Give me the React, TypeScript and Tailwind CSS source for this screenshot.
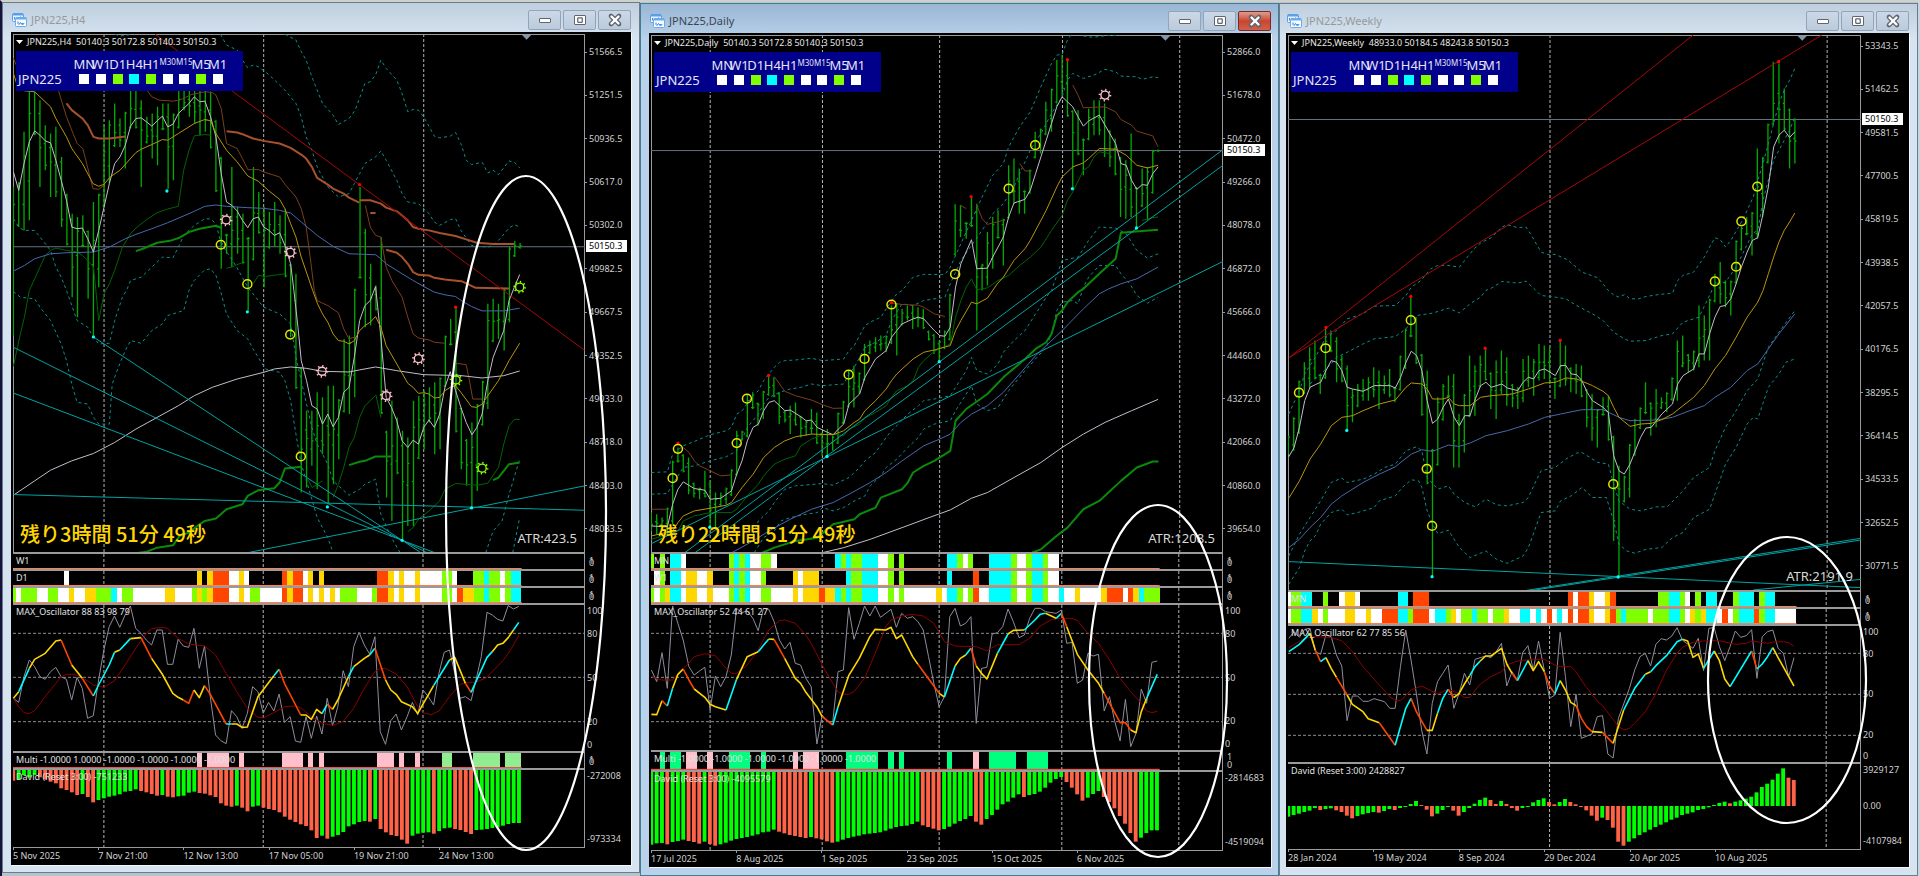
import { Square, X } from "lucide-react";

type Marker = "circle" | "pink" | "lime" | "high" | "low";

interface Curve {
  color: string;
  width?: number;
  dash?: string;
  paths: string[];
}

interface ChartWindow {
  title: string;
  active: boolean;
  frame: string;
  axis: string;
  quote: string;
  remaining: string;
  atr: string;
  prices: string[];
  pricePad: string;
  current: { value: string; y: number };
  originX: number;
  width: number;
  priceBox: [number, number];
  grid: number[];
  bars: string;
  curves: Curve[];
  marks: [Marker, number, number][];
  triangle: number;
  strips: { label: string; data: string }[];
  osc: { label: string; size: string; box: [number, number]; levels: number[]; fast: string; slow: string; main: string };
  multi?: { label: string; size: string; data: string };
  david: { label: string; size: string; box: [number, number]; base: number; data: string; axis: string[] };
  dates: string[];
  dateRow: string;
  ring: { box: string; cx: number; cy: number; rx: number; ry: number };
}

const STEP = 13.06;

const SEG: Record<string, string> = {
  w: "#ffffff",
  l: "#7fff00",
  g: "#ffd700",
  c: "#00ffff",
  r: "#ff4500",
  p: "#ffc0cb",
  s: "#00ff7f",
  n: "#90ee90",
};

const WHITE = "#c4bccb";
const GOLD = "#b8960c";
const BROWN = "#7a3e1e";
const SIENNA = "#a8522d";
const BLUE = "#4868ac";
const GREEN = "#006400";
const GREEN2 = "#0a8a0a";
const TEAL = "#0a8f8f";
const TREND = "#00a3a3";
const RED = "#a80808";

const h4: ChartWindow = {
  title: "JPN225,H4",
  active: false,
  frame: "mb-[3px] pl-[8px] pr-[8px] pb-[7px]",
  axis: "w-[46px]",
  quote: "JPN225,H4  50140.3 50172.8 50140.3 50150.3",
  remaining: "残り3時間 51分 49秒",
  atr: "ATR:423.5",
  prices: ["51566.5", "51251.5", "50936.5", "50617.0", "50302.0", "49982.5", "49667.5", "49352.5", "49033.0", "48718.0", "48403.0", "48083.5"],
  pricePad: "pt-3 pb-[17px]",
  current: { value: "50150.3", y: 739 },
  originX: 32,
  width: 1401,
  priceBox: [102, 1554],
  grid: [255, 646, 1038],
  bars:
    "560,1005 545,680 395,690 275,660 275,405 300,560 375,510 400,590 380,590 470,680 580,735 640,890 650,950 645,740 690,895 605,1005 580,860 375,620 360,550 310,440 355,440 335,505 270,385 265,385 300,560 350,430 340,475 320,495 310,390 310,565 340,540 260,385 265,330 265,350 265,370 265,405 265,395 275,445 360,575 470,805 700,760 500,800 620,760 640,790 710,930 500,780 575,700 620,860 635,745 605,740 645,760 625,830 790,1010 820,1165 1100,1475 1230,1460 1230,1395 1175,1465 1190,1360 1155,1510 1155,1450 1195,1375 1015,1235 1005,1240 865,1190 560,835 685,980 790,975 855,930 710,1240 1290,1490 1200,1560 1250,1420 1290,1615 1310,1575 1200,1575 1185,1375 1170,1345 1160,1265 1145,1360 1130,1345 1005,1160 955,1035 920,1295 1220,1405 1315,1455 1265,1520 1210,1470 1140,1275 910,1225 895,1025 910,1015 865,1050 740,965 722,770 728,745",
  curves: [
    {
      color: TEAL,
      dash: "3 3",
      paths: [
        "698,103 725,120 738,155 750,180 764,230 777,270 790,310 816,345 829,373 855,355 870,330 894,250 907,245 920,225 933,180 946,205 972,240 985,280 999,335 1012,328 1025,330 1038,350 1064,408 1077,413 1103,408 1116,397 1129,430 1142,480 1155,493 1181,486 1195,518 1208,510 1221,523 1247,482 1260,486 1273,503",
        "540,103 555,135 581,150 594,180 607,203 620,195 633,200 660,225 698,270 725,310 738,350 750,410 764,450 777,500 803,560 829,590 855,580 868,550 881,520 894,490 920,470 933,452 946,480 972,540 985,580 999,605 1025,610 1051,640 1064,665 1077,675 1103,658 1116,655 1129,690 1155,735 1195,740 1208,735 1221,720 1247,683 1260,673 1273,680",
        "33,655 46,680 59,690 85,690 98,710 124,750 137,800 150,830 163,870 189,960 215,980 229,1010 242,1030 268,1028 281,960 300,890 310,870 320,840 346,830 372,800 398,770 424,772 437,740 450,705 463,690 476,675 502,655 516,656 529,670 542,730 580,800 607,860 646,920 685,940 712,970 725,1070 738,1140 764,1280 777,1330 803,1390 816,1440 855,1483 881,1465 894,1450 920,1435 933,1540 959,1610 980,1655",
        "33,873 50,890 85,895 98,920 124,960 150,1030 163,1080 176,1150 189,1205 215,1210 229,1250 242,1270 268,1270 275,1150 290,1100 307,1050 320,1020 346,1028 372,990 398,970 411,945 450,930 463,870 476,840 500,810 516,805 529,825 540,870 555,940 581,990 607,1015 620,1045 650,1105 685,1115 698,1140 712,1200 725,1300 738,1390 751,1440 777,1550 803,1610 816,1655",
        "1190,1655 1208,1590 1230,1560 1247,1480 1273,1375",
        "1256,1655 1273,1550",
        "282,103 295,108 318,104",
      ],
    },
    {
      color: GREEN,
      paths: [
        "33,1097 50,1000 60,950 72,870 85,835 98,800 111,765 124,750 137,743 163,750 189,755 202,765 215,780 229,800 235,870 242,960 255,880 268,850 281,810 300,740 320,700 333,683 359,658 385,637 411,626 437,618 450,510 463,450 476,407 502,403 516,405",
        "555,803 568,800 580,793 594,787",
        "620,850 633,825 650,828 685,822 698,820",
        "751,1430 765,1460 790,1440",
        "816,1490 829,1450 842,1400 855,1340 868,1310 881,1250 894,1215 907,1200 921,1183 933,1250",
        "999,1592 1012,1580 1025,1555 1051,1530 1077,1500 1090,1465 1116,1448 1168,1453 1195,1447 1221,1400 1234,1330 1247,1275 1260,1256 1273,1256",
      ],
    },
    {
      color: GREEN2,
      width: 2,
      paths: [
        "333,752 350,745 385,727 420,720 440,712 463,695 489,685 529,676 542,682",
        "337,1656 360,1652 385,1640 424,1633 440,1605 463,1595 489,1570 502,1560 529,1553 555,1525 594,1510 607,1485 633,1468 672,1462 685,1445 698,1403 738,1398",
        "855,1393 881,1383 894,1380 920,1367 959,1367",
        "1208,1438 1221,1430 1247,1390 1273,1385",
      ],
    },
    {
      color: BROWN,
      paths: [
        "33,175 40,195",
        "143,270 163,350 189,430 203,445 228,565 242,567 255,555",
        "360,270 372,290 390,300 424,303 440,300 470,283 502,275 520,277 529,285 542,325 555,430 581,445 594,475 607,508 633,508 646,515 685,530 700,555 725,590 738,625 750,680 762,790 770,870 777,900 790,908 803,915 829,937 842,985 855,1015 868,1010",
        "895,615 907,680 920,705 933,710 946,800 960,840 985,890 999,950 1012,1000 1025,1012 1051,1018 1064,1025 1090,1028",
        "1116,1088 1142,1092 1150,1140 1158,1195 1181,1195",
      ],
    },
    {
      color: SIENNA,
      width: 2,
      paths: [
        "163,310 176,330 202,355 215,375 229,410 242,415 268,415 307,409",
        "555,393 581,397 594,402 620,415 646,422 685,430 712,443 738,463 750,475 764,500 777,533 803,553 816,565 842,580 855,592 880,607",
        "881,600 907,600 933,610 946,622 972,633 999,660 1012,680 1025,685 1051,690 1077,698 1116,707 1142,717 1168,727 1208,731 1260,731",
        "946,748 972,757 985,770 999,790 1012,815 1025,823 1051,825 1064,832 1090,837 1130,842 1145,850 1165,862 1247,864",
        "907,638 920,638",
      ],
    },
    {
      color: BLUE,
      paths: [
        "33,812 60,795 85,775 124,760 163,757 229,755 268,740 307,715 333,702 372,685 411,667 463,640 502,618 529,614 555,618 607,622 646,624 685,630 712,638 738,665 777,705 816,738 855,760 920,763 933,775 946,790 985,820 1012,840 1038,858 1064,875 1090,883 1116,888 1130,900 1155,918 1181,931 1234,931 1273,923",
      ],
    },
    {
      color: WHITE,
      paths: [
        "33,1483 85,1440 124,1408 176,1380 229,1358 281,1325 333,1285 385,1250 437,1215 476,1185 520,1160 581,1135 646,1115 672,1105 712,1099 750,1103 790,1112 855,1114 880,1108 920,1099 972,1110 1038,1122 1103,1124 1116,1123 1181,1132 1234,1125 1273,1111",
        "33,515 46,570 59,490 72,425 85,392 98,405 111,422 124,428 137,480 150,540 163,600 176,680 189,685 202,683 215,715 229,755 242,690 255,620 268,550 281,490 294,470 307,435 320,378 333,355 346,353 359,365 372,378 385,362 398,348 411,380 424,372 437,340 450,325 463,310 476,290 489,305 502,303 516,350 529,410 542,520 555,605 568,615 581,632 594,660 607,682 620,655 633,650 646,680 659,690 672,705 685,697 698,735 712,790 720,870 730,980 738,1080 751,1140 764,1215 777,1225 790,1270 803,1240 816,1278 829,1250 842,1175 855,1160 868,1070 881,960 894,915 907,900 920,858 933,1010 946,1190 959,1220 972,1260 985,1320 999,1340 1012,1318 1025,1330 1038,1280 1051,1258 1064,1280 1077,1240 1090,1160 1103,1113 1116,1170 1129,1220 1142,1265 1156,1302 1168,1280 1181,1240 1195,1140 1208,1070 1221,1030 1234,990 1247,900 1260,860 1273,822",
      ],
    },
    {
      color: GOLD,
      paths: [
        "33,220 45,265 60,272 85,275 98,290 124,320 137,355 163,410 176,445 202,490 228,550 242,558 255,552 270,530 294,510 333,457 346,447 372,433 398,418 411,420 437,400 476,370 502,358 516,362 529,400 555,450 581,485 607,527 633,543 660,573 685,597 698,625 712,670 725,710 738,770 752,820 766,870 778,910 790,940 803,965 816,1000 829,1020 842,1022 855,1030 868,1020 881,990 894,975 907,965 920,948 933,980 946,1035 972,1090 999,1148 1012,1160 1025,1178 1038,1176 1051,1180 1064,1192 1077,1190 1090,1170 1103,1160 1116,1155 1129,1175 1155,1218 1168,1220 1181,1210 1195,1185 1221,1140 1247,1080 1273,1028",
      ],
    },
    {
      color: TREND,
      paths: ["229,1009 985,1618 1032,1656", "33,1040 985,1618 1048,1656", "33,1177 985,1618 1067,1656", "33,1481 1432,1528", "607,1655 1432,1455"],
    },
    { color: RED, paths: ["380,103 1432,1049"] },
  ],
  marks: [
    ["high", 881, 553], ["high", 1116, 920],
    ["low", 409, 572], ["low", 229, 1009], ["low", 606, 934], ["low", 802, 1518], ["low", 985, 1618], ["low", 1155, 1521],
    ["circle", 541, 733], ["circle", 606, 851], ["circle", 711, 1002], ["circle", 737, 1367],
    ["pink", 554, 659], ["pink", 711, 756], ["pink", 789, 1112], ["pink", 1025, 1074], ["pink", 946, 1185],
    ["lime", 1273, 860], ["lime", 1117, 1138], ["lime", 1181, 1402],
  ],
  triangle: 1290,
  strips: [
    { label: "W1", data: "" },
    {
      label: "D1",
      data: "k157 w169 k483 g495 k509 g522 r561 w587 g600 w612 k692 r704 g718 r743 w757 g769 k783 g796 k926 r953 g966 w979 g992 w1018 g1031 w1084 l1110 w1122 k1161 l1187 c1200 l1227 w1240 l1253 c1279",
    },
    {
      label: "",
      data: "l39 w51 l91 w118 l142 w169 g182 w208 g235 l273 c287 w300 l326 w404 g430 w470 l483 g496 l509 g522 r561 w587 g600 w613 l639 w692 r704 g718 r743 w757 g769 w783 g796 w809 g822 w835 l875 w914 l926 r953 g966 w979 g992 w1018 g1031 w1084 l1110 w1122 r1135 g1162 l1187 c1200 l1227 w1240 l1253 c1279",
    },
  ],
  osc: {
    label: "MAX_Oscillator 88 83 98 79",
    size: "h-[148px]",
    box: [195, 438],
    levels: [280, 412, 545],
    fast: "33,475 46,487 59,410 72,360 85,380 98,410 111,418 124,395 137,382 150,410 163,418 176,480 189,412 202,445 215,535 229,527 242,420 255,330 268,260 281,228 294,262 307,225 320,198 333,265 346,280 359,300 372,315 385,270 398,270 411,373 424,373 437,298 450,318 463,322 476,265 489,385 502,318 516,470 529,585 542,602 555,611 568,512 581,530 594,565 607,520 620,440 633,455 646,520 659,487 672,513 685,462 698,547 712,530 725,603 738,607 751,530 764,595 777,528 790,582 803,475 816,557 829,500 842,392 855,440 868,320 881,277 894,315 907,342 920,290 933,575 946,613 959,542 972,522 985,570 999,530 1012,487 1025,525 1038,450 1051,470 1064,495 1077,400 1090,337 1103,330 1116,400 1129,475 1142,470 1156,482 1168,420 1181,350 1195,217 1208,225 1221,238 1234,243 1247,197 1260,207 1273,199",
    slow: "33,475 46,500 59,518 72,521 85,512 111,470 137,430 150,410 163,403 182,403 202,412 229,435 255,442 281,422 307,375 333,325 359,280 372,266 398,262 411,265 437,295 463,312 502,318 529,345 555,400 581,455 607,505 633,532 646,534 672,518 698,500 725,498 738,503 764,530 790,550 816,556 842,545 868,505 894,445 920,395 933,385 946,385 972,402 999,440 1025,500 1038,518 1058,524 1077,513 1103,470 1129,433 1150,427 1168,427 1195,412 1208,395 1234,362 1247,340 1260,315 1273,285",
    main: "g 33,475 46,455 c 72,385 g 85,358 111,340 137,303 150,300 r 176,375 g 202,415 r 229,468 c 242,435 268,375 281,337 g 294,330 c 320,296 g 346,293 r 372,355 g 398,402 424,460 437,472 450,480 r 463,490 476,450 g 489,473 502,437 r 516,463 555,552 c 568,552 g 581,552 594,562 607,561 633,470 672,407 c 685,388 r 698,430 738,525 g 751,525 764,538 777,508 790,521 c 803,493 r 816,508 g 829,480 855,410 c 868,380 g 894,355 907,345 c 920,325 r 946,420 g 959,450 972,463 985,485 1012,500 1025,520 1064,437 c 1103,360 g 1116,352 1142,430 r 1156,457 c 1195,352 1208,335 g 1221,315 1234,310 1247,293 1260,270 c 1273,247",
  },
  multi: {
    label: "Multi -1.0000 1.0000 -1.0000 -1.0000 -1.0000 -1.0000",
    size: "h-[17px]",
    data: "k483 p495 k509 p561 k587 p600 k692 p743 k757 p769 k783 p796 k926 p966 k979 p992 k1018 p1031 k1084 n1110 k1161 n1227 k1240 n1279",
  },
  david: {
    label: "David (Reset 3:00) -751233",
    size: "h-[79px]",
    box: [690, 231],
    base: 690,
    data: "r722 g718 g705 g712 g705 r712 r718 r725 r730 r745 r750 r757 r765 g762 r771 r787 g780 g775 g770 g767 g763 g755 g753 g748 r753 r757 r762 r767 g765 r770 r772 g769 g767 g758 g755 r759 r761 r766 r771 r790 r797 r800 g797 r803 r814 g800 g797 r803 r807 r810 r817 r830 r839 r846 r853 r858 r871 r894 g887 r896 g890 g885 g876 g859 g853 g846 g843 r845 g837 r867 r877 r885 r888 r899 r911 g887 g881 g878 g877 r881 g873 g865 g863 r867 r870 r876 r882 g870 g869 g867 g864 g862 g857 g852 g849 g849",
    axis: ["-272008", "-973334"],
  },
  dates: ["5 Nov 2025", "7 Nov 21:00", "12 Nov 13:00", "17 Nov 05:00", "19 Nov 21:00", "24 Nov 13:00"],
  dateRow: "h-[18px]",
  ring: { box: "0 0 620 833", cx: 515, cy: 481, rx: 80, ry: 337 },
};

const daily: ChartWindow = {
  title: "JPN225,Daily",
  active: true,
  frame: "mt-px pl-[8px] pr-[7px] pb-[8px]",
  axis: "w-12",
  quote: "JPN225,Daily  50140.3 50172.8 50140.3 50150.3",
  remaining: "残り22時間 51分 49秒",
  atr: "ATR:1208.5",
  prices: ["52866.0", "51678.0", "50472.0", "49266.0", "48078.0", "46872.0", "45666.0", "44460.0", "43272.0", "42066.0", "40860.0", "39654.0"],
  pricePad: "pt-[11px] pb-[17px]",
  current: { value: "50150.3", y: 451 },
  originX: 27,
  width: 1401,
  priceBox: [105, 1551],
  grid: [172, 447, 734, 1035, 1322],
  bars:
    "1535,1590 1540,1600 1550,1585 1520,1600 1380,1570 1340,1385 1360,1415 1370,1480 1445,1490 1460,1495 1410,1490 1440,1580 1475,1580 1475,1515 1460,1510 1405,1485 1290,1425 1290,1320 1180,1310 1175,1225 1205,1275 1170,1255 1125,1185 1130,1190 1175,1270 1230,1265 1215,1300 1205,1275 1245,1310 1260,1305 1225,1300 1235,1330 1295,1365 1285,1368 1305,1350 1235,1330 1200,1270 1110,1220 1095,1220 1115,1180 1030,1140 1020,1060 1010,1055 1005,1050 1005,1055 915,1030 910,1065 925,975 915,960 915,985 920,980 925,985 990,1020 1000,1060 1020,1080 990,1045 880,1020 612,765 615,710 665,715 590,680 610,990 790,870 695,855 650,805 630,715 655,795 495,655 475,610 505,640 570,640 508,580 395,475 385,460 305,405 265,395 180,310 165,290 180,350 330,570 330,465 415,525 325,420 300,405 300,405 310,470 390,500 415,525 470,650 480,655 400,650 560,680 505,620 500,660 450,580 448,455",
  curves: [
    {
      color: TEAL,
      dash: "3 3",
      paths: [
        "28,1415 67,1413 80,1360 106,1335 133,1322 172,1302 211,1290 224,1280 237,1240 250,1230 277,1185 290,1170 303,1140 329,1100 342,1085 355,1080 381,1078 420,1073 447,1080 499,1075 512,1050 525,1035 551,975 564,965 590,950 603,925 629,880 642,870 669,830 695,822 747,822 760,800 786,730 812,660 838,590 864,525 890,490 903,440 930,380 956,335 982,260 1008,190 1021,165 1034,163 1047,120 1055,106",
        "28,1480 67,1478 80,1450 106,1400 133,1395 172,1380 211,1368 237,1350 263,1280 290,1240 303,1210 316,1190 342,1175 368,1165 394,1160 420,1150 447,1155 499,1150 512,1120 525,1100 551,1040 577,1025 603,1005 616,960 642,910 669,915 695,900 747,890 760,850 786,780 812,735 838,690 864,640 890,610 916,560 930,520 956,450 982,400 1008,340 1034,290 1047,240 1060,220 1086,235 1112,225 1139,208 1165,215 1178,228 1217,230 1230,238 1256,230 1269,233",
        "1086,108 1110,112 1139,107 1170,106",
        "280,1655 303,1610 329,1590 345,1560 368,1550 407,1540 434,1535 447,1520 473,1530 499,1520 525,1500 551,1485 564,1455 590,1425 603,1400 629,1375 656,1340 682,1310 695,1285 721,1270 760,1260 773,1230 799,1180 812,1155 825,1210 851,1230 877,1220 903,1170 943,1110 969,1075 995,1040 1008,1000 1021,930 1034,905 1060,900 1073,910 1086,860 1099,830 1125,795 1165,795 1178,820 1200,850 1217,885 1243,908 1269,890",
        "277,1600 290,1560 316,1530 329,1505 355,1465 381,1455 447,1448 473,1453 512,1430 538,1400 551,1380 577,1355 603,1310 616,1290 629,1275 656,1240 682,1215 695,1200 721,1195 760,1185 773,1160 799,1110 812,1070 825,1110 851,1120 877,1090 890,1055 916,1020 943,990 969,940 995,890 1008,870 1034,780 1073,770 1099,720 1125,680 1165,683 1191,700 1217,750 1243,773 1269,760",
      ],
    },
    {
      color: GREEN,
      paths: [
        "28,1615 93,1590 106,1560 133,1545 172,1535 224,1535 237,1525 263,1485 290,1450 303,1425 329,1390 355,1375 381,1365 394,1335 420,1315 447,1302 473,1300 499,1305 512,1285 538,1270 551,1252 577,1235 603,1215 616,1190 629,1170 656,1155 669,1140 682,1100 695,1080 721,1052 760,1030 773,950 786,900 799,860 812,835 825,868 851,862 877,840 903,825 930,795 956,770 982,740 1008,690 1034,645 1047,600 1060,575 1086,510 1099,500 1112,470 1125,455 1152,460",
        "1230,660 1256,652 1269,650",
      ],
    },
    {
      color: GREEN2,
      width: 2,
      paths: [
        "300,1655 329,1640 381,1620 434,1610 473,1570 525,1555 538,1540 577,1520 590,1490 642,1465 656,1445 669,1415 695,1395 721,1380 760,1350 773,1260 799,1225 851,1180 890,1130 943,1075 969,1045 995,1025 1008,1000 1021,945 1034,930 1047,905 1073,875 1086,865 1125,820 1165,775 1178,697 1230,692 1269,688",
        "960,1655 982,1645 1020,1605 1047,1580 1086,1525 1125,1500 1178,1440 1217,1400 1256,1382 1270,1382",
      ],
    },
    {
      color: BROWN,
      paths: [
        "28,1525 67,1525",
        "106,1340 120,1355 133,1380 146,1395 172,1410 198,1425 224,1422",
        "329,1128 342,1150 355,1172 381,1185 420,1198 447,1212 473,1223 499,1222",
        "616,907 642,912 682,914 695,920 721,940 747,948",
        "786,615 799,625",
        "825,615 838,655 851,672 890,660",
        "930,490 943,512 956,512",
        "1060,255 1073,285 1086,323 1099,322 1139,320 1165,335 1178,358 1204,375 1217,393 1256,407 1269,440",
      ],
    },
    {
      color: BLUE,
      paths: [
        "225,1655 277,1620 316,1590 368,1555 420,1525 473,1505 512,1480 564,1445 603,1415 642,1380 695,1335 734,1315 760,1300 786,1265 812,1240 851,1215 890,1175 930,1120 969,1065 995,1035 1034,990 1086,925 1125,880 1148,865 1178,850 1217,835 1269,800",
      ],
    },
    {
      color: WHITE,
      paths: [
        "447,1655 499,1640 564,1615 642,1580 708,1550 760,1527 812,1492 851,1475 916,1430 982,1385 1034,1340 1086,1300 1139,1265 1204,1230 1269,1196",
        "28,1575 67,1578 80,1510 93,1465 106,1443 133,1463 159,1468 172,1495 198,1492 224,1470 237,1420 250,1380 263,1320 277,1280 290,1270 303,1230 316,1205 329,1200 342,1215 355,1230 368,1228 394,1248 407,1260 420,1258 434,1280 460,1295 473,1302 486,1285 499,1270 512,1210 525,1195 538,1180 551,1130 577,1075 603,1050 616,1010 629,990 642,970 669,955 682,950 695,955 721,990 734,1005 747,1007 760,980 773,860 786,790 812,718 825,805 851,803 864,770 890,710 903,650 916,608 943,597 956,570 969,520 982,470 995,420 1008,370 1021,320 1034,290 1047,305 1060,320 1073,350 1086,378 1099,362 1125,345 1139,375 1165,430 1178,490 1191,495 1204,540 1217,567 1230,553 1243,555 1256,520 1269,500",
      ],
    },
    {
      color: GOLD,
      paths: [
        "28,1605 80,1590 93,1565 106,1545 133,1530 172,1522 211,1513 224,1505 250,1460 277,1420 290,1395 303,1370 329,1340 355,1320 381,1308 420,1300 473,1302 499,1290 525,1265 538,1255 551,1230 577,1200 603,1165 616,1140 629,1120 642,1105 669,1075 695,1055 721,1048 760,1035 773,990 786,960 812,905 825,910 851,893 875,850 890,830 903,805 916,780 943,745 956,720 995,630 1021,560 1034,530 1060,500 1086,488 1099,475 1125,445 1165,447 1191,465 1217,495 1243,503 1269,495",
      ],
    },
    { color: TREND, paths: ["110,1655 1428,448", "135,1655 1428,495", "28,1628 1428,783"] },
  ],
  marks: [
    ["high", 1047, 179], ["high", 811, 589], ["high", 93, 1327], ["high", 315, 1124], ["high", 616, 907],
    ["low", 1059, 565], ["low", 1216, 683], ["low", 171, 1579], ["low", 458, 1367], ["low", 733, 1083],
    ["circle", 968, 435], ["circle", 903, 565], ["circle", 772, 821], ["circle", 80, 1432], ["circle", 93, 1344],
    ["circle", 237, 1327], ["circle", 262, 1194], ["circle", 511, 1122], ["circle", 550, 1075], ["circle", 616, 912],
    ["pink", 1139, 285],
  ],
  triangle: 1287,
  strips: [
    {
      label: "MN",
      data: "l34 k48 l61 k74 c100 w113 k218 l230 c244 l257 c270 w296 l322 w335 k479 c492 l505 c518 l544 c583 w609 l622 k635 l648 k753 c779 l792 w805 l818 k857 c910 l924 w948 l962 c988 l1001 w1028",
    },
    {
      label: "W1",
      data: "k34 w48 l61 k74 c100 w113 g140 w165 g179 k218 l230 c244 l257 c270 w296 l309 k375 g387 w400 g440 k505 c518 l544 c583 w609 l622 k635 l648 k753 c766 k818 r832 k857 c910 l924 w948 l962 c988 l1001 w1028",
    },
    {
      label: "",
      data: "l34 w48 l61 g74 c100 w113 g140 w165 g179 w218 l230 c244 l257 c270 w296 l322 w375 g387 w400 g440 r453 g479 c492 l505 c518 l544 c583 w609 l622 w635 l648 w727 g740 w753 c779 l792 w805 l818 r832 w857 c910 l924 w948 l962 c988 l1001 w1028 c1041 w1067 g1080 w1132 g1145 r1184 w1198 r1210 g1224 c1237 l1275",
    },
  ],
  osc: {
    label: "MAX_Oscillator 52 44 61 27",
    size: "h-[147px]",
    box: [195, 435],
    levels: [280, 412, 545],
    fast: "28,390 41,425 54,338 67,445 80,198 93,250 106,300 120,380 133,405 146,393 159,382 172,510 185,408 198,440 211,410 224,345 237,205 250,218 263,212 277,235 290,272 303,205 316,208 329,245 342,300 355,327 368,307 381,370 394,375 407,415 420,440 434,612 447,525 460,545 473,545 486,395 499,390 512,203 525,298 538,250 551,198 564,228 577,198 590,232 616,208 629,262 642,220 656,235 669,230 682,245 695,270 708,350 721,430 734,500 747,470 760,230 773,205 786,258 799,250 812,230 825,550 838,385 851,382 864,282 877,278 890,260 903,207 916,245 930,293 943,285 956,235 969,205 982,205 995,215 1021,220 1034,210 1047,310 1060,307 1073,430 1086,420 1099,340 1112,348 1125,343 1139,513 1152,470 1165,545 1178,603 1191,478 1204,620 1217,580 1230,447 1243,490 1256,367 1269,363",
    slow: "28,410 54,420 80,420 106,385 120,370 133,350 159,341 185,347 211,385 224,400 237,400 263,375 290,330 316,270 342,242 355,240 381,250 407,285 420,310 447,375 473,430 486,455 499,463 512,463 525,455 551,415 577,340 603,260 616,240 642,228 669,223 695,228 721,250 747,305 773,318 825,320 851,332 877,314 930,314 956,295 982,258 1008,240 1034,235 1060,235 1073,242 1099,280 1125,310 1152,360 1178,415 1204,455 1230,490 1243,513 1256,518 1269,514",
    main: "g 28,523 41,524 54,482 r 67,498 c 80,445 g 93,403 106,387 r 120,420 133,447 g 159,472 172,493 185,500 211,510 c 237,418 g 263,350 290,335 c 316,297 g 329,298 r 355,355 g 381,415 394,430 407,457 434,500 447,530 r 473,555 c 486,500 g 512,407 538,355 564,290 577,268 603,270 616,262 629,296 642,285 669,350 682,373 r 734,460 g 747,471 c 773,378 g 786,355 799,345 c 812,325 r 825,378 g 838,400 851,417 877,340 c 903,282 g 916,271 943,270 c 969,240 982,223 995,220 g 1021,235 c 1034,220 r 1047,260 g 1073,343 1099,390 1125,430 1139,460 r 1178,548 1191,548 1204,570 g 1217,578 1230,515 1243,475 c 1269,403",
  },
  multi: {
    label: "Multi -1.0000 -1.0000 -1.0000 -1.0000 -1.0000 -1.0000",
    size: "h-5",
    data: "k48 s61 k74 s100 k113 p140 k165 p179 k218 s270 k296 s309 k375 p387 k400 p440 k505 s583 k609 s622 k635 s648 k753 s766 k818 p832 k857 s923 k949 s1001",
  },
  david: {
    label: "David (Reset 3:00) -4095579",
    size: "h-20",
    box: [696, 234],
    base: 696,
    data: "g914 g910 g909 r913 g906 g903 g899 r903 r906 r911 g905 r912 r917 g913 g908 g902 g897 g894 g891 g887 g883 g877 g875 g869 r875 r880 r885 r888 r891 r894 g891 r895 r898 r904 r908 g905 g899 g894 g890 g887 g883 g881 g879 g877 g872 g866 g861 g858 g857 g852 g845 r856 r861 r866 r871 g867 g860 g851 g843 g837 g828 r845 r854 g837 g825 g809 g793 g785 g773 g763 r771 g765 g762 g755 g743 g728 g717 g711 r726 r743 r763 r782 g773 g762 g753 r771 r786 r805 r828 r851 r879 r905 g893 g879 g871 g871",
    axis: ["-2814683", "-4519094"],
  },
  dates: ["17 Jul 2025", "8 Aug 2025", "1 Sep 2025", "23 Sep 2025", "15 Oct 2025", "6 Nov 2025"],
  dateRow: "h-[17px]",
  ring: { box: "0 0 622 834", cx: 509, cy: 648, rx: 69, ry: 176 },
};

const weekly: ChartWindow = {
  title: "JPN225,Weekly",
  active: false,
  frame: "mt-px pl-[6px] pr-[8px] pb-[8px]",
  axis: "w-12",
  quote: "JPN225,Weekly  48933.0 50184.5 48243.8 50150.3",
  remaining: "",
  atr: "ATR:2191.9",
  prices: ["53343.5", "51462.5", "49581.5", "47700.5", "45819.5", "43938.5", "42057.5", "40176.5", "38295.5", "36414.5", "34533.5", "32652.5", "30771.5"],
  pricePad: "pt-[5px] pb-[18px]",
  current: { value: "50150.3", y: 358 },
  originX: 20,
  width: 1404,
  priceBox: [105, 1665],
  grid: [662, 1341],
  bars:
    "1305,1360 1250,1350 1140,1300 1085,1180 1040,1165 1020,1135 1120,1180 985,1135 990,1055 1010,1145 1065,1145 1095,1285 1165,1265 1150,1220 1135,1200 1130,1200 1100,1190 1110,1225 1125,1180 1105,1190 1160,1205 1065,1170 985,1105 890,1010 950,1090 1060,1245 1110,1450 1345,1725 1190,1395 1150,1260 1125,1190 1120,1400 1240,1400 1180,1355 1065,1250 1095,1245 1065,1160 1045,1140 1115,1225 1080,1255 1050,1180 1070,1215 1150,1220 1160,1225 1075,1205 1065,1160 1075,1185 1030,1140 1035,1135 1040,1150 1130,1195 1020,1160 1035,1155 1100,1175 1090,1180 1095,1190 1165,1280 1180,1320 1225,1340 1190,1245 1185,1320 1305,1620 1395,1725 1425,1505 1330,1490 1255,1365 1220,1285 1145,1240 1205,1305 1165,1280 1190,1225 1175,1235 1130,1200 1020,1200 1005,1100 1060,1115 1050,1110 915,1100 945,1080 895,1080 820,905 785,910 840,920 840,945 720,850 680,750 650,705 635,765 445,715 470,650 370,490 185,375 190,430 265,390 325,505 355,490",
  curves: [
    {
      color: TEAL,
      dash: "3 3",
      paths: [
        "22,1240 48,1170 61,1120 87,1070 113,1010 139,990 165,955 204,940 231,917 283,915 309,885 322,860 346,840 370,805 387,795 411,795 440,800 453,780 476,745 492,728 518,712 544,680 557,673 583,682 603,680 614,700 640,755 655,762 675,762 705,778 740,815 779,832 805,870 820,885 831,890 845,882 858,895 880,895 897,888 930,882 962,878 975,840 988,825 1014,815 1040,770 1053,740 1066,712 1079,718 1092,740 1105,720 1131,665 1145,630 1160,590 1171,540 1184,490 1197,430 1210,370 1223,310 1236,270 1249,240 1262,205",
        "74,1150 100,1120 126,1090 139,1070 165,1055 204,1030 231,1015 283,1008 309,985 335,945 374,938 413,923 440,937 466,910 492,890 505,870 520,862 544,843 583,848 603,842 626,868 640,885 675,890 701,895 727,915 766,940 792,960 818,995 844,1015 858,1022 897,1020 936,1005 962,1000 988,965 1027,950 1053,885 1066,850 1092,845 1118,800 1158,700 1171,690 1184,600 1197,540 1210,480 1236,420 1249,390 1262,350",
        "22,1665 48,1600 74,1550 100,1500 126,1445 152,1432 165,1445 204,1435 231,1420 257,1400 283,1390 309,1350 335,1338 348,1350 361,1430 387,1465 413,1455 427,1480 453,1505 479,1518 505,1495 531,1512 557,1515 596,1505 609,1490 622,1455 640,1410 675,1400 701,1375 727,1357 740,1355 779,1385 805,1390 818,1450 831,1500 858,1525 884,1530 923,1518 949,1518 988,1470 1014,1430 1053,1400 1066,1350 1092,1280 1118,1230 1145,1170 1171,1135 1197,1040 1223,995 1262,930",
        "22,1750 48,1700 61,1650 74,1620 87,1605 100,1570 126,1535 152,1525 165,1542 191,1535 231,1520 244,1500 283,1485 300,1460 322,1437 340,1440 348,1460 361,1530 374,1570 387,1598 413,1588 440,1640 466,1670 505,1650 531,1675 557,1687 596,1665 609,1640 640,1535 675,1530 688,1500 714,1485 740,1460 766,1490 800,1490 818,1560 831,1630 850,1650 870,1657 897,1645 936,1640 962,1610 988,1595 1014,1550 1053,1525 1066,1480 1092,1390 1118,1340 1145,1270 1160,1250 1171,1255 1197,1160 1223,1120 1240,1085 1262,1075",
      ],
    },
    {
      color: BLUE,
      paths: [
        "22,1640 48,1615 74,1580 100,1550 126,1510 152,1485 204,1445 244,1420 283,1398 322,1360 348,1347 374,1352 413,1333 440,1337 466,1327 505,1305 557,1290 609,1270 649,1250 688,1240 740,1227 792,1227 831,1250 858,1260 923,1258 962,1250 1000,1232 1040,1215 1066,1190 1105,1160 1145,1110 1171,1090 1197,1045 1223,1000 1262,940",
      ],
    },
    {
      color: WHITE,
      paths: [
        "22,1368 35,1340 48,1280 61,1200 74,1160 87,1152 100,1145 113,1110 126,1080 139,1085 152,1110 165,1160 178,1165 204,1172 231,1155 270,1155 283,1162 296,1130 309,1085 322,1052 335,1065 348,1110 361,1200 374,1268 387,1255 400,1220 413,1195 427,1250 440,1275 453,1245 466,1245 479,1195 492,1155 505,1145 518,1160 544,1150 557,1162 583,1170 596,1145 609,1130 622,1135 635,1110 649,1105 675,1125 688,1095 701,1095 714,1120 727,1122 740,1140 753,1175 766,1200 792,1220 805,1235 818,1365 831,1410 844,1420 858,1390 884,1310 897,1282 910,1280 936,1240 962,1210 975,1150 988,1125 1014,1105 1027,1060 1040,1060 1053,1000 1066,950 1079,918 1092,915 1105,895 1118,850 1131,800 1145,755 1158,720 1171,712 1184,640 1197,560 1210,440 1223,405 1236,390 1249,412 1262,395",
      ],
    },
    {
      color: GOLD,
      paths: [
        "22,1492 48,1440 74,1375 100,1330 126,1275 152,1250 178,1245 204,1230 244,1210 283,1198 309,1160 322,1147 348,1150 361,1165 374,1195 400,1195 413,1190 427,1210 440,1215 466,1215 492,1190 518,1185 570,1180 609,1165 649,1147 675,1145 701,1132 727,1135 766,1155 792,1172 805,1185 818,1220 831,1250 858,1277 884,1270 910,1268 936,1257 962,1240 988,1215 1014,1190 1040,1155 1066,1105 1092,1065 1118,1010 1145,950 1171,905 1184,870 1197,820 1210,770 1223,725 1236,690 1249,665 1262,638",
      ],
    },
    { color: RED, paths: ["22,1072 1013,105", "22,1072 1328,105"] },
    { color: TREND, paths: ["22,1682 1425,1760", "605,1768 1425,1612", "620,1768 1425,1617", "1160,1767 1425,1735"] },
  ],
  marks: [
    ["high", 113, 981], ["high", 321, 888], ["high", 503, 1043], ["high", 687, 1019], ["high", 1222, 185],
    ["low", 164, 1289], ["low", 373, 1727], ["low", 829, 1728],
    ["circle", 47, 1176], ["circle", 112, 1043], ["circle", 321, 959], ["circle", 360, 1404], ["circle", 373, 1575],
    ["circle", 817, 1450], ["circle", 1066, 843], ["circle", 1118, 799], ["circle", 1131, 663], ["circle", 1170, 559],
  ],
  triangle: 1280,
  strips: [
    {
      label: "MN",
      data: "w27 l53 c79 k106 l119 k146 w159 g184 w197 k289 c315 k328 r367 k707 r720 w733 r759 g772 w799 g811 r824 k929 l955 c981 l995 w1007 k1020 l1033 k1046 c1073 k1112 l1126 c1164 k1177 l1190 c1216",
    },
    {
      label: "",
      data: "w27 l53 c79 g93 w106 l119 w159 g184 w211 g223 w250 r289 c315 l328 r367 w380 c407 l420 g432 w445 l471 c485 l511 w524 l550 g563 w589 c615 w628 c641 w655 r667 w681 c693 w707 r720 w733 r759 g772 w799 g811 r824 l837 c850 l903 w916 l955 c981 l995 w1007 g1020 l1033 g1046 c1073 w1086 r1099 w1112 l1126 c1164 r1177 l1190 c1216 w1268",
    },
  ],
  osc: {
    label: "MAX_Oscillator 62 77 85 56",
    size: "h-[138px]",
    box: [198, 408],
    levels: [280, 403, 526],
    fast: "22,235 35,215 48,232 61,208 74,205 87,275 100,283 113,225 126,230 139,285 152,318 165,482 178,408 191,408 204,424 217,424 231,416 257,425 270,445 283,445 296,320 309,210 322,300 335,400 348,510 361,582 374,430 387,365 400,340 413,315 427,445 440,400 453,340 466,375 479,298 505,288 518,293 531,275 544,250 557,378 570,335 583,360 596,278 609,257 622,330 635,243 649,330 662,415 675,405 688,217 701,350 714,500 727,403 740,535 766,522 779,470 792,467 805,582 818,594 831,475 858,385 871,330 884,290 897,280 910,318 923,253 936,236 949,240 962,228 975,203 988,240 1014,265 1027,235 1040,332 1053,205 1066,203 1079,260 1092,302 1105,260 1118,213 1131,232 1145,227 1158,209 1171,355 1184,230 1197,215 1210,210 1223,265 1236,280 1249,350 1262,293",
    slow: "22,263 61,235 87,230 126,233 152,242 178,275 204,320 244,375 270,410 283,421 296,422 322,390 348,378 387,402 413,388 440,400 453,413 466,412 492,372 518,350 544,335 557,315 583,303 622,298 649,298 675,315 688,320 714,320 727,335 740,360 753,383 779,423 792,437 818,478 831,500 844,510 858,505 871,490 897,455 923,400 949,330 975,280 988,262 1014,247 1040,243 1079,242 1118,253 1145,250 1158,243 1197,250 1210,246 1236,245 1249,248 1262,259",
    main: "c 22,275 48,253 74,220 g 87,270 r 100,305 c 113,293 g 126,325 139,352 r 165,405 g 178,433 204,455 217,476 244,488 r 283,556 c 309,445 322,415 r 335,455 361,511 g 374,511 387,460 c 400,415 413,388 r 427,413 g 440,400 453,372 466,347 c 479,320 492,303 g 505,288 518,288 544,265 557,312 570,340 r 583,362 c 609,302 g 622,332 635,305 649,335 r 662,378 675,401 c 688,362 g 701,390 714,427 727,437 r 740,475 753,500 766,515 g 792,517 r 818,550 g 844,450 c 871,385 897,343 g 910,335 c 923,317 949,287 975,245 988,238 g 1001,243 1014,292 1027,282 1040,325 c 1066,273 g 1079,302 1092,357 1105,380 c 1158,273 r 1171,327 c 1184,312 1197,290 1210,263 g 1223,293 1262,378",
  },
  david: {
    label: "David (Reset 3:00) 2428827",
    size: "h-[87px]",
    box: [612, 255],
    base: 738,
    data: "g770 g765 g761 g756 g752 g744 r750 g747 g745 r751 r756 r767 r775 g768 g763 g759 g756 r758 g753 g747 r750 g744 g741 g732 g723 r735 r749 r769 g761 g750 g741 r752 r767 g756 g744 g731 g720 g713 r720 r732 g723 r732 r744 r752 g744 g741 g727 g720 g715 r726 r733 g726 g717 r726 r733 r741 r751 r767 r782 g773 r780 r803 r845 r857 g845 g835 g825 g817 g809 g801 g794 g787 g779 g773 g765 g761 g757 g750 g747 g742 g735 g729 g725 r730 g725 g721 g716 g710 g697 g681 g671 g659 g641 g625 r653 r660",
    axis: ["3929127", "0.00", "-4107984"],
  },
  dates: ["28 Jan 2024", "19 May 2024", "8 Sep 2024", "29 Dec 2024", "20 Apr 2025", "10 Aug 2025"],
  dateRow: "h-[18px]",
  ring: { box: "0 0 623 834", cx: 501, cy: 647, rx: 79, ry: 143 },
};

const timeframes = [
  { label: "MN", color: "bg-white" },
  { label: "W1", color: "bg-white" },
  { label: "D1", color: "bg-[#7fff00]" },
  { label: "H4", color: "bg-[#00ffff]" },
  { label: "H1", color: "bg-[#7fff00]" },
  { label: "M30", color: "bg-white" },
  { label: "M15", color: "bg-white" },
  { label: "M5", color: "bg-[#7fff00]" },
  { label: "M1", color: "bg-white" },
];

function Poly({ points, color, width = 1, dash }: { points: string; color: string; width?: number; dash?: string }) {
  return (
    <polyline points={points} fill="none" stroke={color} strokeWidth={width} strokeDasharray={dash} strokeLinejoin="round" vectorEffect="non-scaling-stroke" />
  );
}

function Plot({ win, box, children }: { win: ChartWindow; box: [number, number]; children: React.ReactNode }) {
  return (
    <svg
      className="absolute inset-0 h-full w-full"
      viewBox={`${win.originX} ${box[0]} ${win.width} ${box[1]}`}
      preserveAspectRatio="none"
      aria-hidden="true"
    >
      {win.grid.map((x) => (
        <Poly key={x} points={`${x},${box[0]} ${x},${box[0] + box[1]}`} color="#b4b4b4" dash="3 2" />
      ))}
      {children}
    </svg>
  );
}

// vertical high-low bar with an open tick on the left and a close tick on the right
function barPath(win: ChartWindow) {
  const bars = win.bars.split(" ").map((b) => b.split(",").map(Number));
  const mid = (i: number) => (bars[i][0] + bars[i][1]) / 2;
  return bars
    .map(([hi, lo], i) => {
      const x = Math.round(win.originX + 1 + i * STEP);
      const clamp = (v: number) => Math.min(lo - 4, Math.max(hi + 4, v));
      const open = clamp(mid(Math.max(0, i - 1)));
      const close = clamp(mid(Math.min(bars.length - 1, i + 1)));
      return `M${x} ${hi}V${lo}M${x - 4} ${open}H${x}M${x} ${close}H${x + 4}`;
    })
    .join("");
}

function Mark({ mark }: { mark: [Marker, number, number] }) {
  const [kind, x, y] = mark;
  if (kind === "high" || kind === "low") {
    return <ellipse cx={x} cy={y} rx="4" ry="5" fill={kind === "high" ? "#ff0000" : "#00ffff"} />;
  }
  if (kind === "circle") {
    return <ellipse cx={x} cy={y} rx="11" ry="13" fill="none" stroke="#e6e600" strokeWidth="1.5" vectorEffect="non-scaling-stroke" />;
  }
  const color = kind === "pink" ? "#ffc0cb" : "#8cff00";
  return (
    <g fill="none" stroke={color}>
      <ellipse cx={x} cy={y} rx="10" ry="12" strokeWidth="1.4" vectorEffect="non-scaling-stroke" />
      <ellipse cx={x} cy={y} rx="13" ry="16" strokeWidth="2" strokeDasharray="1.3 2.8" vectorEffect="non-scaling-stroke" />
    </g>
  );
}

function Segments({ win, data, box }: { win: ChartWindow; data: string; box: [number, number] }) {
  let start = win.originX;
  return (
    <>
      {data.split(" ").filter(Boolean).map((token) => {
        const from = start;
        const end = Number(token.slice(1));
        start = end;
        if (token[0] === "k") return null;
        return <rect key={end} x={from} y={box[0]} width={end - from} height={box[1]} fill={SEG[token[0]]} shapeRendering="crispEdges" />;
      })}
    </>
  );
}

function OscLine({ data }: { data: string }) {
  const parts: { color: string; points: string[] }[] = [];
  let last = "";
  data.split(" ").forEach((token) => {
    if (token.length === 1) {
      parts.push({ color: SEG[token], points: last ? [last] : [] });
    } else {
      parts[parts.length - 1].points.push(token);
      last = token;
    }
  });
  return (
    <>
      {parts.map((part, i) => (
        <Poly key={i} points={part.points.join(" ")} color={part.color} width={1.6} />
      ))}
    </>
  );
}

function Pane({ win, size, axis, children }: { win: ChartWindow; size: string; axis: React.ReactNode; children: React.ReactNode }) {
  return (
    <div className={`flex ${size}`}>
      <div className="relative min-w-0 flex-1 overflow-hidden border-t-2 border-r border-[#9a9a9a]">{children}</div>
      <div className={`shrink-0 border-t-2 border-black text-[9px] leading-3 text-[#d0d0d0] ${win.axis}`}>{axis}</div>
    </div>
  );
}

function PaneLabel({ children }: { children: React.ReactNode }) {
  return <p className="absolute top-px left-[3px] text-[9px] leading-3 whitespace-pre text-[#e0e0e0]">{children}</p>;
}

function ZeroOne({ loose }: { loose?: boolean }) {
  return (
    <div className={`flex h-full flex-col justify-center pl-1 ${loose ? "leading-[8px]" : "leading-[2px]"}`}>
      <span>1</span>
      <span>0</span>
    </div>
  );
}

function TitleButton({ label, danger, children }: { label: string; danger?: boolean; children: React.ReactNode }) {
  return (
    <button
      type="button"
      aria-label={label}
      className={`flex h-5 w-[33px] items-center justify-center rounded-[2px] border ${
        danger
          ? "border-[#7a2a22] bg-gradient-to-b from-[#e09a8c] via-[#c8452f] to-[#d0604a] text-white"
          : "border-[#93a3b8] bg-gradient-to-b from-[#cad8e7] to-[#bccbdc] text-[#5f6670]"
      }`}
    >
      {children}
    </button>
  );
}

function ChartIcon() {
  return (
    <svg className="h-[14px] w-[15px]" viewBox="0 0 15 14" aria-hidden="true">
      <rect x="0.5" y="0.5" width="11" height="8" rx="1" fill="#e8f3ff" stroke="#5b9fe4" />
      <path d="M1 1.500h10" stroke="#5b9fe4" strokeWidth="2" />
      <path d="M2.5 6.500V4M4.500 6V4M8.500 5V3.500" stroke="#4a90d9" />
      <rect x="3.5" y="4.5" width="11" height="9" rx="1" fill="#f6fbff" stroke="#6aaaf0" />
      <path d="M4 5.500h10" stroke="#6aaaf0" strokeWidth="2" />
      <path d="M6 8.500v2l1 1 1.500-2 1.500 2 1-1.500v1.500l1-1" fill="none" stroke="#2f7fd0" />
    </svg>
  );
}

function SymbolPanel() {
  return (
    <div className="absolute top-4 left-0.5 flex h-10 w-[227px] items-end bg-[#00008b] text-[13px] text-[#e4e4f4]">
      <span className="w-[60px] pb-0.5 pl-0.5 leading-5">JPN225</span>
      <div className="grid w-[150px] grid-cols-9 pb-[7px]">
        {timeframes.map((tf) => (
          <div key={tf.label} className="flex flex-col items-center">
            <span className={`flex h-[15px] w-0 justify-center whitespace-nowrap ${tf.label.length > 2 ? "text-[8px] leading-[9px]" : "leading-[15px]"}`}>
              {tf.label}
            </span>
            <span className={`mt-0.5 h-[10px] w-[10px] ${tf.color}`} />
          </div>
        ))}
      </div>
    </div>
  );
}

function ChartPanel({ win }: { win: ChartWindow }) {
  const currentTop = ((win.current.y - win.priceBox[0]) / win.priceBox[1]) * 100;
  const stripBox: [number, number] = [0, 45];
  return (
    <section
      className={`flex flex-col border ${win.frame} ${
        win.active
          ? "border-[#3f7f95] bg-gradient-to-b from-[#9ab6d4] to-[#b9d1ea] to-[34px]"
          : "border-[#6d7a88] bg-gradient-to-b from-[#bfcfde] to-[#d6e3f0] to-[34px]"
      }`}
    >
      <header className="flex h-[29px] shrink-0 items-center gap-1 pt-1 pl-px">
        <ChartIcon />
        <h2 className={`flex-1 text-[11px] leading-4 ${win.active ? "text-[#3c4650]" : "text-[#96999c]"}`}>{win.title}</h2>
        <div className="flex gap-0.5">
          <TitleButton label="Minimize">
            <span className="mt-0.5 h-[5px] w-3 rounded-[1px] border border-[#5f6670] bg-white" />
          </TitleButton>
          <TitleButton label="Maximize">
            <span className="flex h-[10px] w-3 items-center justify-center rounded-[1px] border border-[#5f6670] bg-white">
              <Square className="h-[6px] w-[6px] text-[#5f6670]" strokeWidth={5} />
            </span>
          </TitleButton>
          <TitleButton label="Close" danger={win.active}>
            <span className="relative flex h-3 w-3 items-center justify-center">
              <X className="absolute h-4 w-4 text-[#5f6670]" strokeWidth={7} />
              <X className="absolute h-[14px] w-[14px] text-white" strokeWidth={4} />
            </span>
          </TitleButton>
        </div>
      </header>

      <div className="relative flex flex-1 flex-col bg-black pt-0.5 pl-0.5 shadow-[1px_1px_0_#f4f8fc]">
        {/* Price */}
        <div className="flex min-h-[400px] flex-1">
          <div className="relative min-w-0 flex-1 border border-b-0 border-[#9a9a9a]">
            <div className="absolute -inset-px overflow-hidden">
              <Plot win={win} box={win.priceBox}>
                <Poly points={`${win.originX},${win.priceBox[0] + 1} ${win.originX + win.width},${win.priceBox[0] + 1}`} color="#9a9a9a" />
                <Poly points={`${win.originX},${win.current.y} ${win.originX + win.width},${win.current.y}`} color="#66727e" />
                <path d={barPath(win)} fill="none" stroke="#00ac00" strokeWidth="1.3" vectorEffect="non-scaling-stroke" />
                {win.curves.map((curve) =>
                  curve.paths.map((points) => (
                    <Poly key={points} points={points} color={curve.color} width={curve.width} dash={curve.dash} />
                  ))
                )}
                {win.marks.map((mark, i) => (
                  <Mark key={i} mark={mark} />
                ))}
                <path d={`M${win.triangle - 13} ${win.priceBox[0] + 1}h26l-13 16z`} fill="#8496aa" />
              </Plot>
            </div>
            <p className="absolute top-px left-0.5 flex items-center gap-1 text-[9px] leading-3 whitespace-pre text-[#e8e8e8]">
              <svg className="h-1 w-[7px]" viewBox="0 0 7 4" aria-hidden="true">
                <path d="M0 0h7L3.500 4z" fill="#fff" />
              </svg>
              {win.quote}
            </p>
            <SymbolPanel />
            <p className="absolute bottom-1.5 left-[6px] font-['Noto_Sans_CJK_JP',sans-serif] text-[20px] leading-6 font-medium whitespace-pre text-[#ffd700]">
              {win.remaining}
            </p>
            <p className="absolute right-[7px] bottom-1.5 text-[13px] leading-4 text-[#d8d8d8]">{win.atr}</p>
          </div>
          <div className={`relative flex shrink-0 flex-col justify-between text-[9px] text-[#d0d0d0] ${win.axis} ${win.pricePad}`}>
            {win.prices.map((price) => (
              <div key={price} className="flex h-3 items-center gap-0.5 leading-3">
                <span className="h-px w-0.5 bg-[#9a9a9a]" />
                {price}
              </div>
            ))}
            <span
              className="absolute left-px -mt-1.5 w-[41px] bg-white pl-[3px] leading-3 text-black"
              style={{ top: `${currentTop}%` }}
            >
              {win.current.value}
            </span>
          </div>
        </div>

        {/* Trend strips */}
        {win.strips.map((strip) => (
          <Pane key={strip.label} win={win} size="h-[17px]" axis={<ZeroOne />}>
            <Plot win={win} box={stripBox}>
              <Segments win={win} data={strip.data} box={stripBox} />
              <rect x={win.originX} y="42" width="1248" height="3" fill="#ff7f50" />
            </Plot>
            <PaneLabel>{strip.label}</PaneLabel>
          </Pane>
        ))}

        {/* Oscillator */}
        <Pane
          win={win}
          size={win.osc.size}
          axis={
            <div className="flex h-full flex-col pl-0.5">
              <span>100</span>
              <span className="flex-1" />
              <span>80</span>
              <span className="flex-[3]" />
              <span>50</span>
              <span className="flex-[3]" />
              <span>20</span>
              <span className="flex-1" />
              <span>0</span>
            </div>
          }
        >
          <Plot win={win} box={win.osc.box}>
            {win.osc.levels.map((y) => (
              <Poly key={y} points={`${win.originX},${y} ${win.originX + win.width},${y}`} color="#8c8c8c" dash="3 2" />
            ))}
            <Poly points={win.osc.fast} color="#8f8c9c" />
            <Poly points={win.osc.slow} color="#8b0000" />
            <OscLine data={win.osc.main} />
          </Plot>
          <PaneLabel>{win.osc.label}</PaneLabel>
        </Pane>

        {/* Multi timeframe */}
        {win.multi && (
          <Pane win={win} size={win.multi.size} axis={<ZeroOne loose={win.active} />}>
            <Plot win={win} box={stripBox}>
              <Segments win={win} data={win.multi.data} box={stripBox} />
              <rect x={win.originX} y="42" width="1248" height="3" fill="#e0584a" />
            </Plot>
            <PaneLabel>{win.multi.label}</PaneLabel>
          </Pane>
        )}

        {/* David histogram */}
        <Pane
          win={win}
          size={win.david.size}
          axis={
            <div className="flex h-full flex-col justify-between pb-0.5 pl-0.5">
              {win.david.axis.map((label) => (
                <span key={label}>{label}</span>
              ))}
            </div>
          }
        >
          <Plot win={win} box={win.david.box}>
            {win.david.data.split(" ").map((token, i) => {
              const y = Number(token.slice(1));
              const { base } = win.david;
              return (
                <rect
                  key={i}
                  x={win.originX + 1 + i * STEP - 5}
                  y={Math.min(base, y)}
                  width="9.500"
                  height={Math.abs(y - base)}
                  fill={token[0] === "g" ? "#00ff00" : "#ff6347"}
                />
              );
            })}
          </Plot>
          <PaneLabel>{win.david.label}</PaneLabel>
        </Pane>

        {/* Dates */}
        <div className={`flex ${win.dateRow}`}>
          <div className="flex min-w-0 flex-1 border-t border-[#9a9a9a] text-[9px] whitespace-nowrap text-[#d0d0d0]">
            {win.dates.map((date) => (
              <div key={date} className="w-[14.9%] shrink-0">
                <span className="block h-0.5 w-px bg-[#9a9a9a]" />
                <span className="block leading-3">{date}</span>
              </div>
            ))}
          </div>
          <div className={`shrink-0 ${win.axis}`} />
        </div>

        <svg className="pointer-events-none absolute inset-0 h-full w-full" viewBox={win.ring.box} preserveAspectRatio="none" aria-hidden="true">
          <ellipse cx={win.ring.cx} cy={win.ring.cy} rx={win.ring.rx} ry={win.ring.ry} fill="none" stroke="#fff" strokeWidth="2.2" />
        </svg>
      </div>
    </section>
  );
}

export default function App() {
  return (
    <main className="grid min-h-screen grid-cols-[638fr_639fr_639fr] border-t-2 border-r-2 border-l-2 border-t-[#cfd2cc] border-r-[#c8d4e0] border-l-[#14143c] bg-[#b4c4d0] font-['Noto_Sans',sans-serif]">
      <ChartPanel win={h4} />
      <ChartPanel win={daily} />
      <ChartPanel win={weekly} />
    </main>
  );
}
